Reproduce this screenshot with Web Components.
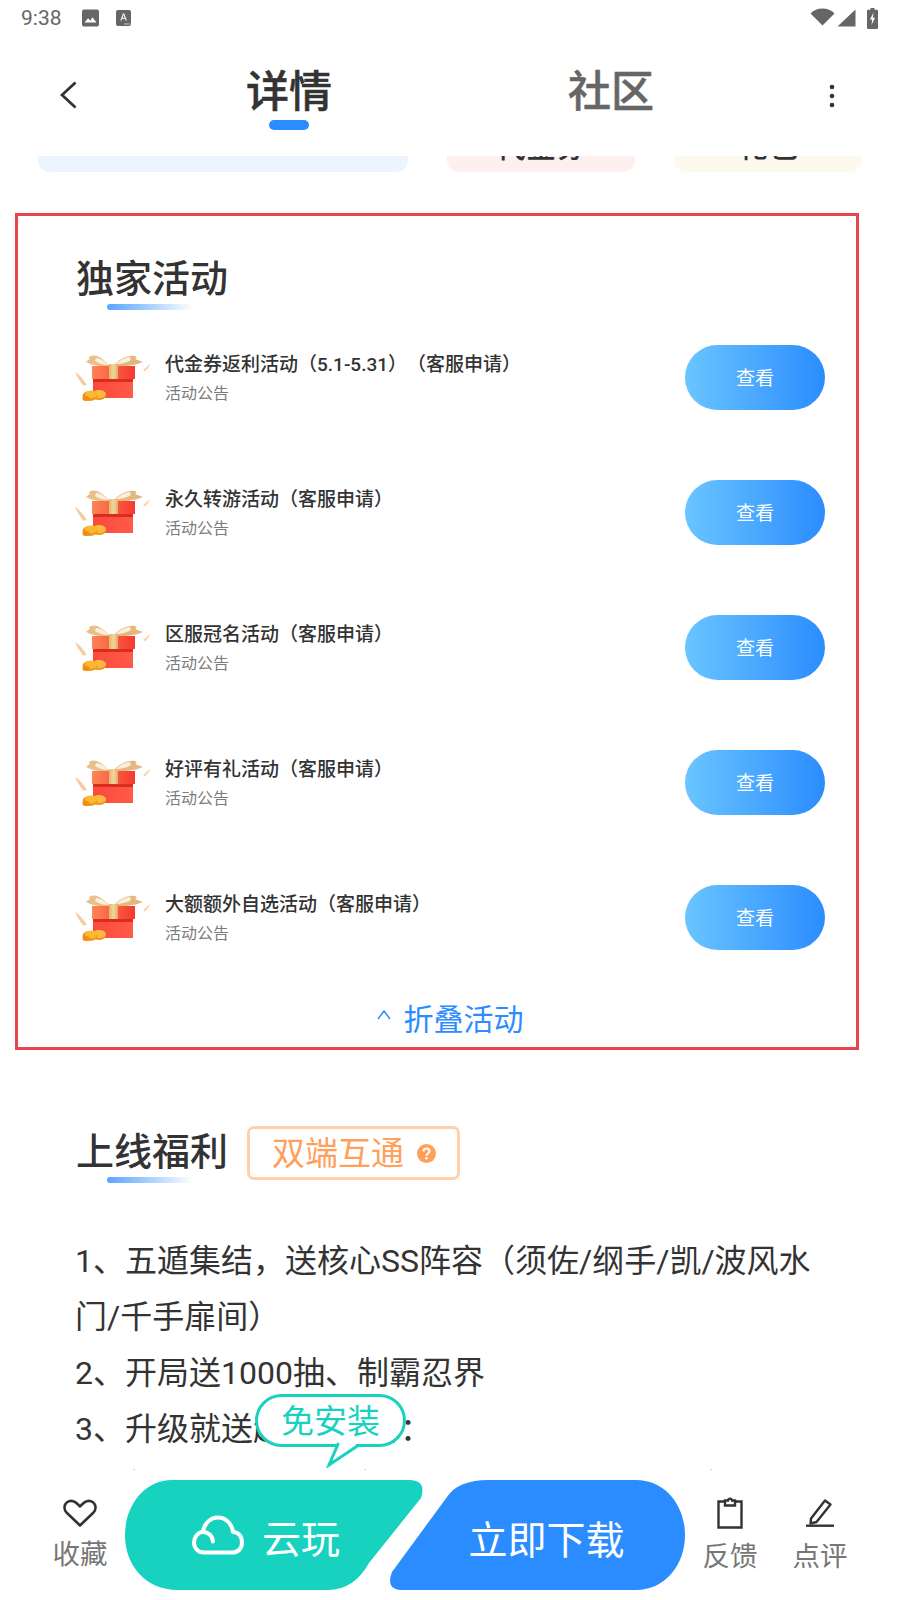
<!DOCTYPE html>
<html lang="zh-CN">
<head>
<meta charset="utf-8">
<title>详情</title>
<style>
html,body{margin:0;padding:0;background:#fff}
body{width:900px;height:1600px;overflow:hidden;font-family:Roboto,"Noto Sans CJK SC","Noto Sans",sans-serif;color:#333;text-spacing-trim:space-all;font-feature-settings:"chws" 0,"palt" 0}
</style>
</head>
<body>
<app-page>
  <status-bar slot="status"></status-bar>
  <top-nav slot="nav"></top-nav>
  <card-strip></card-strip>
  <activity-panel>
    <section-title>独家活动</section-title>
    <activity-row name="代金券返利活动（5.1-5.31）（客服申请）"></activity-row>
    <activity-row name="永久转游活动（客服申请）"></activity-row>
    <activity-row name="区服冠名活动（客服申请）"></activity-row>
    <activity-row name="好评有礼活动（客服申请）"></activity-row>
    <activity-row name="大额额外自选活动（客服申请）"></activity-row>
    <fold-link>折叠活动</fold-link>
  </activity-panel>
  <welfare-block>
    <section-title slot="title">上线福利</section-title>
    <info-badge slot="title">双端互通</info-badge>
    <div>1、五遁集结，送核心SS阵容（须佐/纲手/凯/波风水门/千手扉间）</div>
    <div>2、开局送1000抽、制霸忍界</div>
    <div>3、升级就送超值S忍者：</div>
    <div style="margin-top:1px">4、每日登录送海量金币，人人都有百元大礼包</div>
  </welfare-block>
  <bottom-bar slot="bar"></bottom-bar>
</app-page>
<script>
function reg(name, css, html, setup){
  customElements.define(name, class extends HTMLElement{
    connectedCallback(){
      if(this.shadowRoot) return;
      const r=this.attachShadow({mode:'open'});
      r.innerHTML='<style>'+css+'</style>'+html;
      if(setup) setup.call(this,r);
    }
  });
}
reg('app-page',`
:host{display:flex;flex-direction:column;width:900px;height:1600px;background:#fff}
.main{flex:1;min-height:0;overflow:hidden}
`,`<slot name="status"></slot><slot name="nav"></slot><div class="main"><slot></slot></div><slot name="bar"></slot>`);

reg('status-bar',`
:host{display:flex;align-items:center;height:36px;padding:0 22px 0 21px;box-sizing:border-box;color:#666;font:400 21px/36px Roboto,sans-serif}
.t{width:61px}
svg{display:block;flex:none}
.sp{flex:1}
`,`<span class="t">9:38</span>
<svg width="17" height="18" viewBox="0 0 17 18" style="margin-right:17px"><rect y="0.5" width="17" height="17" rx="2" fill="#666"/><path d="M2.500 13.500l3.600-4.200 2.200 2.400 2.100-3.400 4.100 5.200z" fill="#fff"/></svg>
<svg width="15" height="16" viewBox="0 0 15 16"><rect width="15" height="16" rx="2" fill="#666"/><path d="M4.300 10.500L7 3.500h1.200l2.700 7H9.700l-.6-1.700H6.100l-.6 1.700zM6.500 7.800h2.200L7.600 4.800z" fill="#fff"/><path d="M8.500 13.500h1.200v1H8.500zm2 0h1.200v1h-1.200zm2 0h1.200v1h-1.200z" fill="#fff"/></svg>
<span class="sp"></span>
<svg width="25" height="18" viewBox="0 0 25 18" style="margin:-2px 2px 0 0"><path d="M0.500 5.500C3.800 2 7.500 .5 12.500 .5S21.200 2 24.500 5.500L12.500 17.500z" fill="#666"/></svg>
<svg width="19" height="18" viewBox="0 0 19 18" style="margin-right:11px"><path d="M18.500 .5V17.500H.5z" fill="#666"/></svg>
<svg width="11" height="21" viewBox="0 0 11 21"><path d="M3.500 0h4v1.800H10a1 1 0 0 1 1 1V20a1 1 0 0 1-1 1H1a1 1 0 0 1-1-1V2.800a1 1 0 0 1 1-1h2.500z" fill="#666"/><path d="M6.500 4.500L3 11.500h2.300L4.500 17l3.600-7.300H5.800z" fill="#fff"/></svg>`);

reg('top-nav',`
:host{display:block;height:120px;background:#fff}
.row{display:flex;height:120px}
.back{width:160px;padding:45px 0 0 60px;box-sizing:border-box}
.tab{width:84px;text-align:center;font-size:43px;line-height:42px;font-weight:500;-webkit-text-stroke:.5px currentColor;padding-top:35px;color:#333;display:flex;flex-direction:column;align-items:center;white-space:nowrap}
.tab i{display:block;width:40px;height:10px;border-radius:5px;background:#2b8cff;margin-top:7px;-webkit-text-stroke:0}
.tab.a{margin-left:87px}
.tab.b{color:#666;margin-left:238px}
.more{margin-left:auto;padding:48px 65px 0 0}
svg{display:block}
`,`<div class="row">
<div class="back"><svg width="18" height="28" viewBox="0 0 18 28"><path d="M15.500 1.500L2 14l13.500 12.500" fill="none" stroke="#333" stroke-width="2.800"/></svg></div>
<div class="tab a">详情<i></i></div>
<div class="tab b">社区</div>
<div class="more"><svg width="6" height="24" viewBox="0 0 6 24"><circle cx="3" cy="3" r="2.300" fill="#333"/><circle cx="3" cy="12" r="2.300" fill="#333"/><circle cx="3" cy="21" r="2.300" fill="#333"/></svg></div>
</div>`);

reg('card-strip',`
:host{display:flex;padding-left:38px;margin-top:-44px}
.c{height:60px;border-radius:0 0 12px 12px;box-sizing:border-box;padding-bottom:10px;display:flex;align-items:flex-end;justify-content:center;font-size:30px;line-height:30px;font-weight:500;color:#333}
.a{width:370px;background:#ecf5fe}
.b{width:188px;margin-left:39px;background:#fff0f0}
.d{width:188px;margin-left:39px;background:#fef9ef}
`,`<div class="c a"></div><div class="c b">代金券</div><div class="c d">礼包</div>`);

reg('activity-panel',`
:host{display:block;width:844px;margin:41px 0 0 15px;box-sizing:border-box;border:3px solid #e8444b;padding:44px 0 7px}
`,`<slot></slot>`);

reg('section-title',`
:host{display:block;width:151px;font-size:38px;line-height:38px;font-weight:500;color:#333;white-space:nowrap;margin-left:58px}
:host([slot=title]){margin-left:0;margin-top:7px}
i{display:block;width:86px;height:6px;margin:6px 0 0 31px;border-radius:3px 0 0 3px;background:linear-gradient(90deg,#5aa5ff,#a9d0ff 50%,#fff)}
`,`<slot></slot><i></i>`);

reg('gift-icon',`
:host{display:block;width:80px;height:50px;flex:none}
svg{display:block}
`,`<svg width="80" height="50" viewBox="0 0 80 50">
<defs>
<linearGradient id="lid" x1="0" x2="1"><stop offset="0" stop-color="#ff8556"/><stop offset="1" stop-color="#f5392f"/></linearGradient>
<linearGradient id="box" x1="0" x2="1"><stop offset="0" stop-color="#fb4a3c"/><stop offset="1" stop-color="#ff5a48"/></linearGradient>
<linearGradient id="rb" x1="0" x2="1"><stop offset="0" stop-color="#e3b56e"/><stop offset=".5" stop-color="#f4d49c"/><stop offset="1" stop-color="#e0ae66"/></linearGradient>
</defs>
<path d="M3 19c4 2 8 7 12 13l-4 .5C8 28 5 24 3 19z" fill="#f9c9a0"/>
<path d="M71 17l7-6-1 3-4 4.500z" fill="#fbd2b0"/>
<path d="M38 13C31 6 25 1 19 3c-3 1-2 2-1 3-2 1-3 2-4 3 6 3 11 4 20 5z" fill="#e8c08a"/>
<path d="M41 13c6-7 15-11 22-10 2 1 2 2 0 3l8 3c-7 3-15 4-27 5z" fill="#e3b87f"/>
<path d="M24 5c4 0 9 3 12 7-5 0-10-2-13-4z" fill="#fbeeda"/>
<path d="M58 4c-4 0-10 3-14 7 6 0 12-2 15-4z" fill="#fbeeda"/>
<rect x="21" y="26" width="40" height="19" fill="url(#box)"/>
<rect x="21" y="26" width="40" height="3" fill="#d92d22"/>
<rect x="20" y="13" width="43" height="13" fill="url(#lid)"/>
<rect x="37" y="11" width="9" height="15" fill="url(#rb)"/>
<ellipse cx="27" cy="42.500" rx="7" ry="4.500" fill="#f0981a"/>
<ellipse cx="27" cy="41" rx="7" ry="4" fill="#f9bb3f"/>
<ellipse cx="18" cy="43" rx="7.500" ry="5" fill="#ef9416"/>
<ellipse cx="19" cy="41.500" rx="6" ry="4" fill="#fbb92f"/>
<ellipse cx="14" cy="45.500" rx="3.500" ry="2.500" fill="#f08c12"/>
</svg>`);

reg('activity-row',`
:host{display:flex;align-items:center;height:135px;padding:0 31px 0 54px;box-sizing:border-box}
.txt{flex:1;margin-left:13px;min-width:0;padding-top:2px}
.n{font-size:19px;line-height:26px;font-weight:500;color:#333;white-space:nowrap;height:26px}
.s{font-size:16px;line-height:24px;color:#7c7c7c;margin-top:4px}
.btn{flex:none;width:140px;height:65px;border-radius:33px;background:linear-gradient(90deg,#6ac5ff,#2b8cff);color:#fff;font-size:19px;line-height:24px;padding-top:2px;box-sizing:border-box;display:flex;align-items:center;justify-content:center}
`,`<gift-icon></gift-icon><div class="txt"><div class="n"></div><div class="s">活动公告</div></div><div class="btn">查看</div>`,
function(r){r.querySelector('.n').textContent=this.getAttribute('name');});

reg('fold-link',`
:host{display:flex;align-items:center;justify-content:center;height:40px;margin-top:15px;color:#2b8cff;font-size:30px;line-height:40px;padding-left:26px}
svg{display:block;margin-right:13px;margin-top:-11px}
`,`<svg width="14" height="10" viewBox="0 0 14 10"><path d="M1 9l6-8 6 8" fill="none" stroke="#2b8cff" stroke-width="1.500"/></svg><slot></slot>`);

reg('info-badge',`
:host{display:flex;align-items:center;box-sizing:border-box;width:213px;height:54px;margin-left:20px;padding-left:22px;padding-top:1px;border:3px solid #ffd0ac;border-radius:7px;color:#ff9f5a;font-size:33px;line-height:48px;white-space:nowrap}
svg{display:block;margin-left:13px;margin-top:-1px;flex:none}
`,`<slot></slot><svg width="19" height="19" viewBox="0 0 19 19"><circle cx="9.500" cy="9.500" r="9.500" fill="#ff9f5a"/><path d="M6.500 7.500c0-1.800 1.300-3 3-3s3 1.100 3 2.700c0 2.300-3 2.400-3 4.600" fill="none" stroke="#fff" stroke-width="2"/><circle cx="9.500" cy="14.300" r="1.300" fill="#fff"/></svg>`);

reg('welfare-block',`
:host{display:block;padding:76px 60px 0 76px}
.h{display:flex;align-items:flex-start;height:57px}
.b{margin:50px 0 0 -1px;font-size:32px;line-height:56px;color:#333}
`,`<div class="h"><slot name="title"></slot></div><div class="b"><slot></slot></div>`);

reg('bottom-bar',`
:host{display:flex;position:relative;height:130px;background:#fff;flex:none}
.act{position:absolute;display:flex;flex-direction:column;align-items:center;color:#777;font-size:27.500px;line-height:36px;width:80px}
.act svg{display:block}
.act span{position:absolute;white-space:nowrap}
.pair{display:flex;margin:10px 0 0 125px;height:110px}
.cta{position:relative;height:110px;display:flex;align-items:center;color:#fff;flex:none}
.cta>svg.bg{position:absolute;inset:0;display:block}
.cta>*:not(.bg){position:relative}
.g{width:303px;font-size:39px}
.g .cl{margin-left:67px;margin-right:18px}
.g span{top:1px}
.d{width:295px;margin-left:-38px;font-size:39px;justify-content:center;padding-left:18px;box-sizing:border-box}
.d span{top:2px}
.bub{position:absolute;left:255px;top:-76px;width:151px;height:53px;box-sizing:border-box;border:3px solid #17d2bf;border-radius:27px;background:#fff;color:#17d2bf;font-size:33px;line-height:49px;text-align:center}
.bub svg{position:absolute;left:67px;top:41px;display:block}
`,`<div class="act" style="left:40px;top:29px"><svg width="34" height="28" viewBox="0 0 34 28"><path d="M17 26.500L3.500 13.500C.5 10 1 5.500 4 3.200 7.500.7 12 1.500 17 7.500c5-6 9.500-6.800 13-4.300 3 2.300 3.500 6.800.5 10.300z" fill="none" stroke="#333" stroke-width="2.600" stroke-linejoin="round"/></svg><span style="top:38px">收藏</span></div>
<div class="pair">
<div class="cta g"><svg class="bg" width="303" height="110" viewBox="125 1480 303 110"><path d="M172 1480H409Q427 1480 421 1498L369 1563Q354 1590 328 1590H178C145 1590 125 1565 125 1535C125 1505 145 1480 172 1480Z" fill="#17d2bf"/></svg>
<svg class="cl" width="52" height="40" viewBox="0 0 52 40"><path d="M12 37.500C6 37.500 2 33 2 27.500S6 17 11 17C12 8 19 2.500 26 2.500S40 8 41 17c5.500 0 9 4.500 9 10.500s-4 10-9.500 10z" fill="none" stroke="#fff" stroke-width="4" stroke-linejoin="round"/><path d="M11 17c5 0 9.500 3.500 10 9.500" fill="none" stroke="#fff" stroke-width="4" stroke-linecap="round"/></svg><span>云玩</span></div>
<div class="cta d"><svg class="bg" width="295" height="110" viewBox="390 1480 295 110"><path d="M489 1480H636C665 1480 685 1505 685 1535C685 1565 665 1590 636 1590H403Q385 1590 392 1572L447 1497Q458 1480 489 1480Z" fill="#2b8cff"/></svg><span>立即下载</span></div>
</div>
<div class="act" style="left:690px;top:27px"><svg width="28" height="32" viewBox="0 0 28 32"><path d="M9 4.500H2.500V30.500H25.500V4.500H19" fill="none" stroke="#333" stroke-width="2.400"/><path d="M9 8.500V3.500H12C12.500 1 15.500 1 16 3.500H19V8.500z" fill="none" stroke="#333" stroke-width="2.400"/></svg><span style="top:42px">反馈</span></div>
<div class="act" style="left:780px;top:27px"><svg width="30" height="30" viewBox="0 0 30 30"><path d="M6 21.500L20 3.500l5.500 4L11.500 25l-6 1.500z" fill="none" stroke="#333" stroke-width="2.400" stroke-linejoin="round"/><path d="M1 28.700H29" stroke="#333" stroke-width="2.400"/></svg><span style="top:42px">点评</span></div>
<div class="bub">免安装<svg width="34" height="30" viewBox="0 0 34 30"><path d="M13.500 5L4 27 33 7.500" fill="#fff" stroke="#17d2bf" stroke-width="3"/><path d="M15 3H31V6.500L14 16z" fill="#fff"/></svg></div>`);
</script>
</body>
</html>
